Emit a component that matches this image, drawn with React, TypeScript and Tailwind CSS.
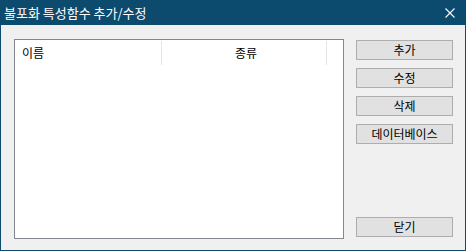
import React from "react";

const font = { fontFamily: '"Noto Sans CJK KR", "Noto Sans", sans-serif' };

function DlgButton({ label }: { label: string }) {
    return (
        <button
            type="button"
            className="h-[20px] w-[97px] border border-[#adadad] bg-[#e1e1e1] text-[12px] font-normal leading-none text-black flex items-center justify-center"
        >
            {label}
        </button>
    );
}

export default function App() {
    return (
        <div className="w-[466px] h-[251px] bg-[#0c4a6e] flex flex-col" style={font}>
            {/* Title bar */}
            <div className="h-[25px] flex items-center justify-between pl-[4px] pr-[11px] text-white">
                <span className="text-[13px] leading-none">불포화 특성함수 추가/수정</span>
                <svg width="10" height="10" viewBox="0 0 10 10">
                    <path d="M0.5 0.5 L9.5 9.5 M9.5 0.5 L0.5 9.5" stroke="#ffffff" strokeWidth="1.1" />
                </svg>
            </div>

            {/* Body */}
            <div className="flex-1 mx-[1px] mb-[1px] bg-[#f0f0f0] flex pl-[13px] pr-[12px] pt-[14px] pb-[11px]">
                {/* List */}
                <div className="w-[330px] h-full border border-[#828790] bg-white">
                    <div className="flex h-[25px] text-[12px] text-black">
                        <div className="w-[147px] flex items-center pl-[7px] border-r border-[#e5e5e5] mt-[1px]">이름</div>
                        <div className="w-[165px] flex items-center justify-center pl-[4px] border-r border-[#e5e5e5] mt-[1px]">종류</div>
                    </div>
                </div>

                <div className="flex-1" />

                {/* Buttons */}
                <div className="flex flex-col pt-[1px] pb-[2px]">
                    <div className="flex flex-col gap-[8px]">
                        <DlgButton label="추가" />
                        <DlgButton label="수정" />
                        <DlgButton label="삭제" />
                        <DlgButton label="데이터베이스" />
                    </div>
                    <div className="flex-1" />
                    <DlgButton label="닫기" />
                </div>
            </div>
        </div>
    );
}
